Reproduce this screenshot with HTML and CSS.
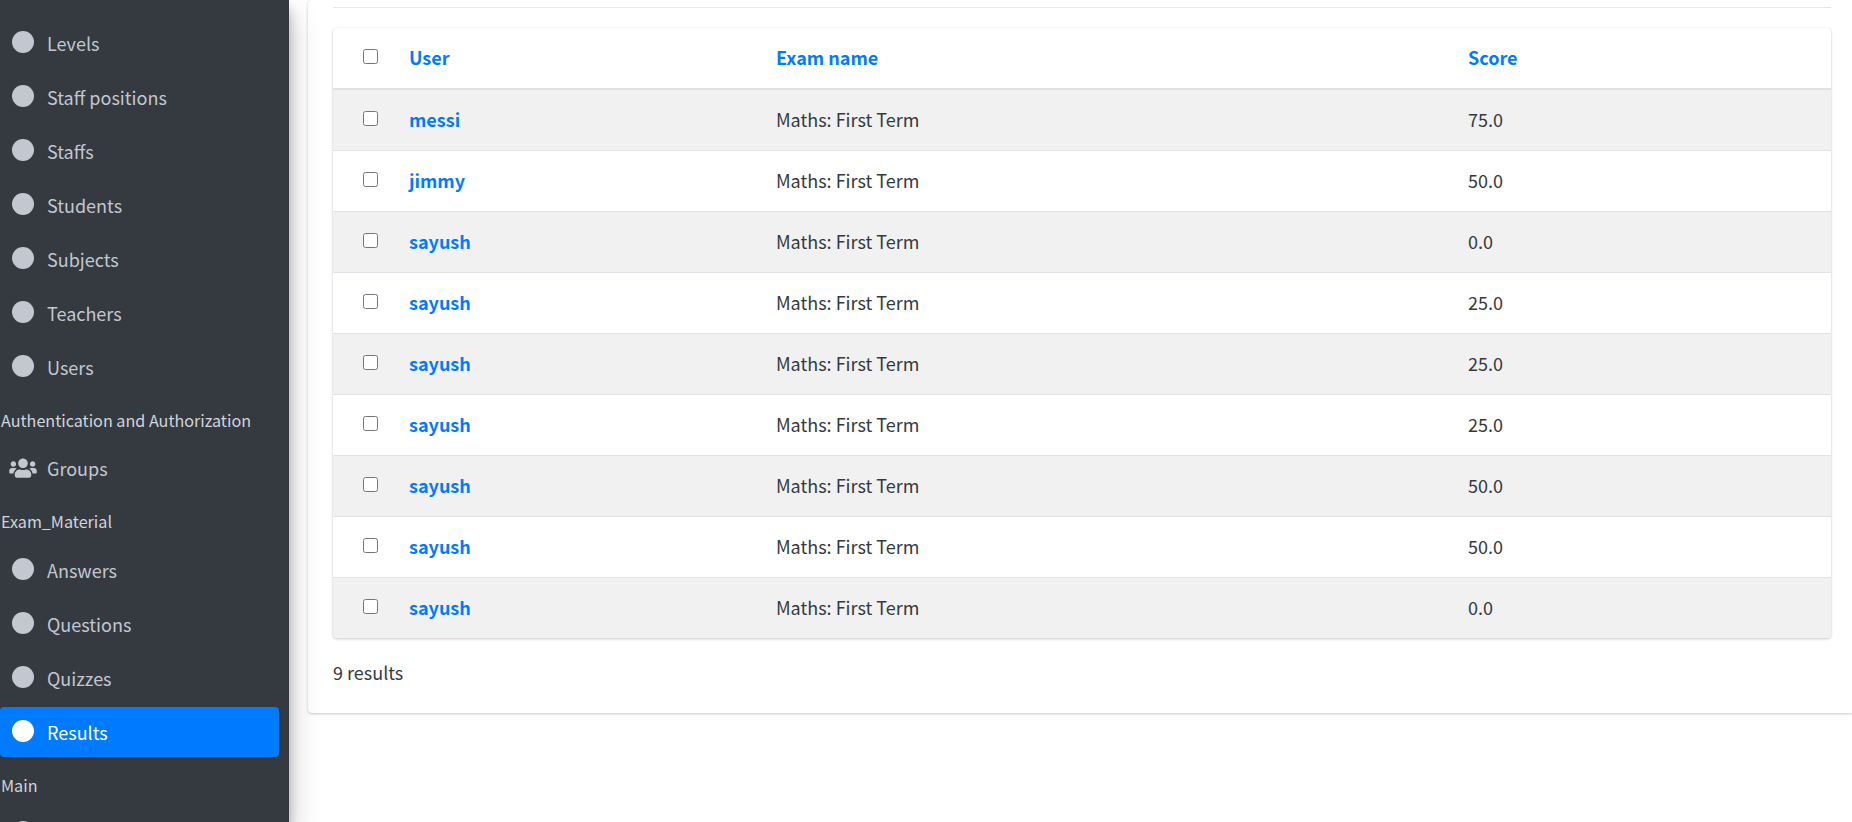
FILE: index.html
```html
<!DOCTYPE html>
<html>

<head>
    <title>Results</title>
    <meta name="viewport" content="width=device-width, initial-scale=1">
    <link rel="stylesheet" href="styles.css">
</head>

<body>
    <aside class="sidebar">
        <a class="nav-item"><span class="nav-dot"></span>Levels</a>
        <a class="nav-item"><span class="nav-dot"></span>Staff positions</a>
        <a class="nav-item"><span class="nav-dot"></span>Staffs</a>
        <a class="nav-item"><span class="nav-dot"></span>Students</a>
        <a class="nav-item"><span class="nav-dot"></span>Subjects</a>
        <a class="nav-item"><span class="nav-dot"></span>Teachers</a>
        <a class="nav-item"><span class="nav-dot"></span>Users</a>
        <div class="nav-header">Authentication and Authorization</div>
        <a class="nav-item">
            <svg class="nav-icon" viewBox="0 0 640 512">
                <path fill="currentColor" d="M96 224c35.3 0 64-28.7 64-64s-28.7-64-64-64-64 28.7-64 64 28.7 64 64 64zm448 0c35.3 0 64-28.7 64-64s-28.7-64-64-64-64 28.7-64 64 28.7 64 64 64zm32 32h-64c-17.6 0-33.5 7.1-45.1 18.6 40.3 22.1 68.9 62 75.1 109.4h66c17.7 0 32-14.3 32-32v-32c0-35.3-28.7-64-64-64zm-256 0c61.9 0 112-50.1 112-112S381.9 32 320 32 208 82.1 208 144s50.1 112 112 112zm76.8 32h-8.3c-20.8 10-43.9 16-68.5 16s-47.6-6-68.5-16h-8.3C179.6 288 128 339.6 128 403.2V432c0 26.5 21.5 48 48 48h288c26.5 0 48-21.5 48-48v-28.8c0-63.6-51.6-115.2-115.2-115.2zm-223.7-13.4C161.5 263.1 145.6 256 128 256H64c-35.3 0-64 28.7-64 64v32c0 17.7 14.3 32 32 32h65.9c6.3-47.4 34.9-87.3 75.2-109.4z"/>
            </svg>
            Groups
        </a>
        <div class="nav-header">Exam_Material</div>
        <a class="nav-item"><span class="nav-dot"></span>Answers</a>
        <a class="nav-item"><span class="nav-dot"></span>Questions</a>
        <a class="nav-item"><span class="nav-dot"></span>Quizzes</a>
        <a class="nav-item active"><span class="nav-dot"></span>Results</a>
        <div class="nav-header">Main</div>
        <a class="nav-item"><span class="nav-dot"></span></a>
    </aside>

    <main class="content">
        <div class="card">
            <hr class="divider">
            <div class="table-box">
                <table class="result-table">
                    <colgroup>
                        <col class="col-check">
                        <col class="col-user">
                        <col class="col-exam">
                        <col>
                    </colgroup>
                    <thead>
                        <tr>
                            <th class="check-cell"><input type="checkbox"></th>
                            <th>User</th>
                            <th>Exam name</th>
                            <th>Score</th>
                        </tr>
                    </thead>
                    <tbody>
                        <tr>
                            <td class="check-cell"><input type="checkbox"></td>
                            <td><a class="user-link">messi</a></td>
                            <td>Maths: First Term</td>
                            <td>75.0</td>
                        </tr>
                        <tr>
                            <td class="check-cell"><input type="checkbox"></td>
                            <td><a class="user-link">jimmy</a></td>
                            <td>Maths: First Term</td>
                            <td>50.0</td>
                        </tr>
                        <tr>
                            <td class="check-cell"><input type="checkbox"></td>
                            <td><a class="user-link">sayush</a></td>
                            <td>Maths: First Term</td>
                            <td>0.0</td>
                        </tr>
                        <tr>
                            <td class="check-cell"><input type="checkbox"></td>
                            <td><a class="user-link">sayush</a></td>
                            <td>Maths: First Term</td>
                            <td>25.0</td>
                        </tr>
                        <tr>
                            <td class="check-cell"><input type="checkbox"></td>
                            <td><a class="user-link">sayush</a></td>
                            <td>Maths: First Term</td>
                            <td>25.0</td>
                        </tr>
                        <tr>
                            <td class="check-cell"><input type="checkbox"></td>
                            <td><a class="user-link">sayush</a></td>
                            <td>Maths: First Term</td>
                            <td>25.0</td>
                        </tr>
                        <tr>
                            <td class="check-cell"><input type="checkbox"></td>
                            <td><a class="user-link">sayush</a></td>
                            <td>Maths: First Term</td>
                            <td>50.0</td>
                        </tr>
                        <tr>
                            <td class="check-cell"><input type="checkbox"></td>
                            <td><a class="user-link">sayush</a></td>
                            <td>Maths: First Term</td>
                            <td>50.0</td>
                        </tr>
                        <tr>
                            <td class="check-cell"><input type="checkbox"></td>
                            <td><a class="user-link">sayush</a></td>
                            <td>Maths: First Term</td>
                            <td>0.0</td>
                        </tr>
                    </tbody>
                </table>
            </div>
            <p class="result-count">9 results</p>
        </div>
    </main>
</body>

</html>
```

FILE: styles.css
```css
html,
body {
    height: 100%;
}

body {
    margin: 0;
    display: flex;
    height: 822px;
    overflow: hidden;
    background: #fff;
    color: #343a40;
    font-family: "Noto Sans CJK SC", "Source Sans Pro", "Noto Sans", sans-serif;
    font-size: 18px;
    line-height: 24px;
}

.sidebar {
    width: 289px;
    flex-shrink: 0;
    box-sizing: border-box;
    padding: 18px 10px 0 0;
    background: #343a40;
    color: #c2c7d0;
    overflow: hidden;
    box-shadow: 0 14px 28px rgba(0, 0, 0, 0.25), 0 10px 10px rgba(0, 0, 0, 0.22);
    position: relative;
    z-index: 2;
}

.nav-item {
    display: flex;
    align-items: center;
    height: 50px;
    margin-bottom: 4px;
    padding-left: 12px;
    border-radius: 4px;
}

.nav-item.active {
    background: #007bff;
    color: #fff;
    box-shadow: 0 1px 3px rgba(0, 0, 0, 0.2);
}

.nav-dot {
    width: 22px;
    height: 22px;
    margin: -2px 13px 0 0;
    border-radius: 50%;
    background: currentColor;
}

.nav-icon {
    width: 28px;
    height: 22px;
    margin: 0 10px 0 -3px;
}

.nav-header {
    height: 24px;
    padding: 12px 0 11.25px 1px;
    color: #d0d4db;
    font-size: 16.15px;
}

.content {
    flex: 1;
    min-width: 0;
    padding: 0 0 0 19px;
}

.card {
    margin: 0 -3px 0 0;
    padding: 0 24px 0 25px;
    height: 713px;
    box-sizing: border-box;
    background: #fff;
    border-radius: 4px;
    box-shadow: 0 0 1px rgba(0, 0, 0, 0.125), 0 1px 3px rgba(0, 0, 0, 0.2);
}

.divider {
    margin: 0 0 20px;
    padding-top: 7px;
    border: none;
    border-bottom: 1px solid #e4e6e9;
}

.table-box {
    border-radius: 4px;
    overflow: hidden;
    box-shadow: 0 0 1px rgba(0, 0, 0, 0.125), 0 1px 3px rgba(0, 0, 0, 0.2);
}

.result-table {
    width: 100%;
    border-collapse: collapse;
    table-layout: fixed;
}

.col-check {
    width: 64px;
}

.col-user {
    width: 367px;
}

.col-exam {
    width: 692px;
}

.result-table th,
.result-table td {
    height: 61px;
    padding: 0 12px 2px;
    box-sizing: border-box;
    text-align: left;
    border-bottom: 1px solid #dee2e6;
}

.result-table th {
    color: #007bff;
    font-weight: 700;
    border-bottom-width: 2px;
}

.result-table tbody tr:nth-child(odd) {
    background: #f1f1f2;
}

.result-table tbody tr:last-child td {
    border-bottom: none;
}

.result-table .check-cell {
    padding: 0 0 0 30px;
}

.check-cell input {
    width: 15px;
    height: 15px;
    margin: -3px 0 0;
    display: block;
}

.user-link {
    color: #007bff;
    font-weight: 700;
}

.result-count {
    margin: 22px 0 0;
}
```
